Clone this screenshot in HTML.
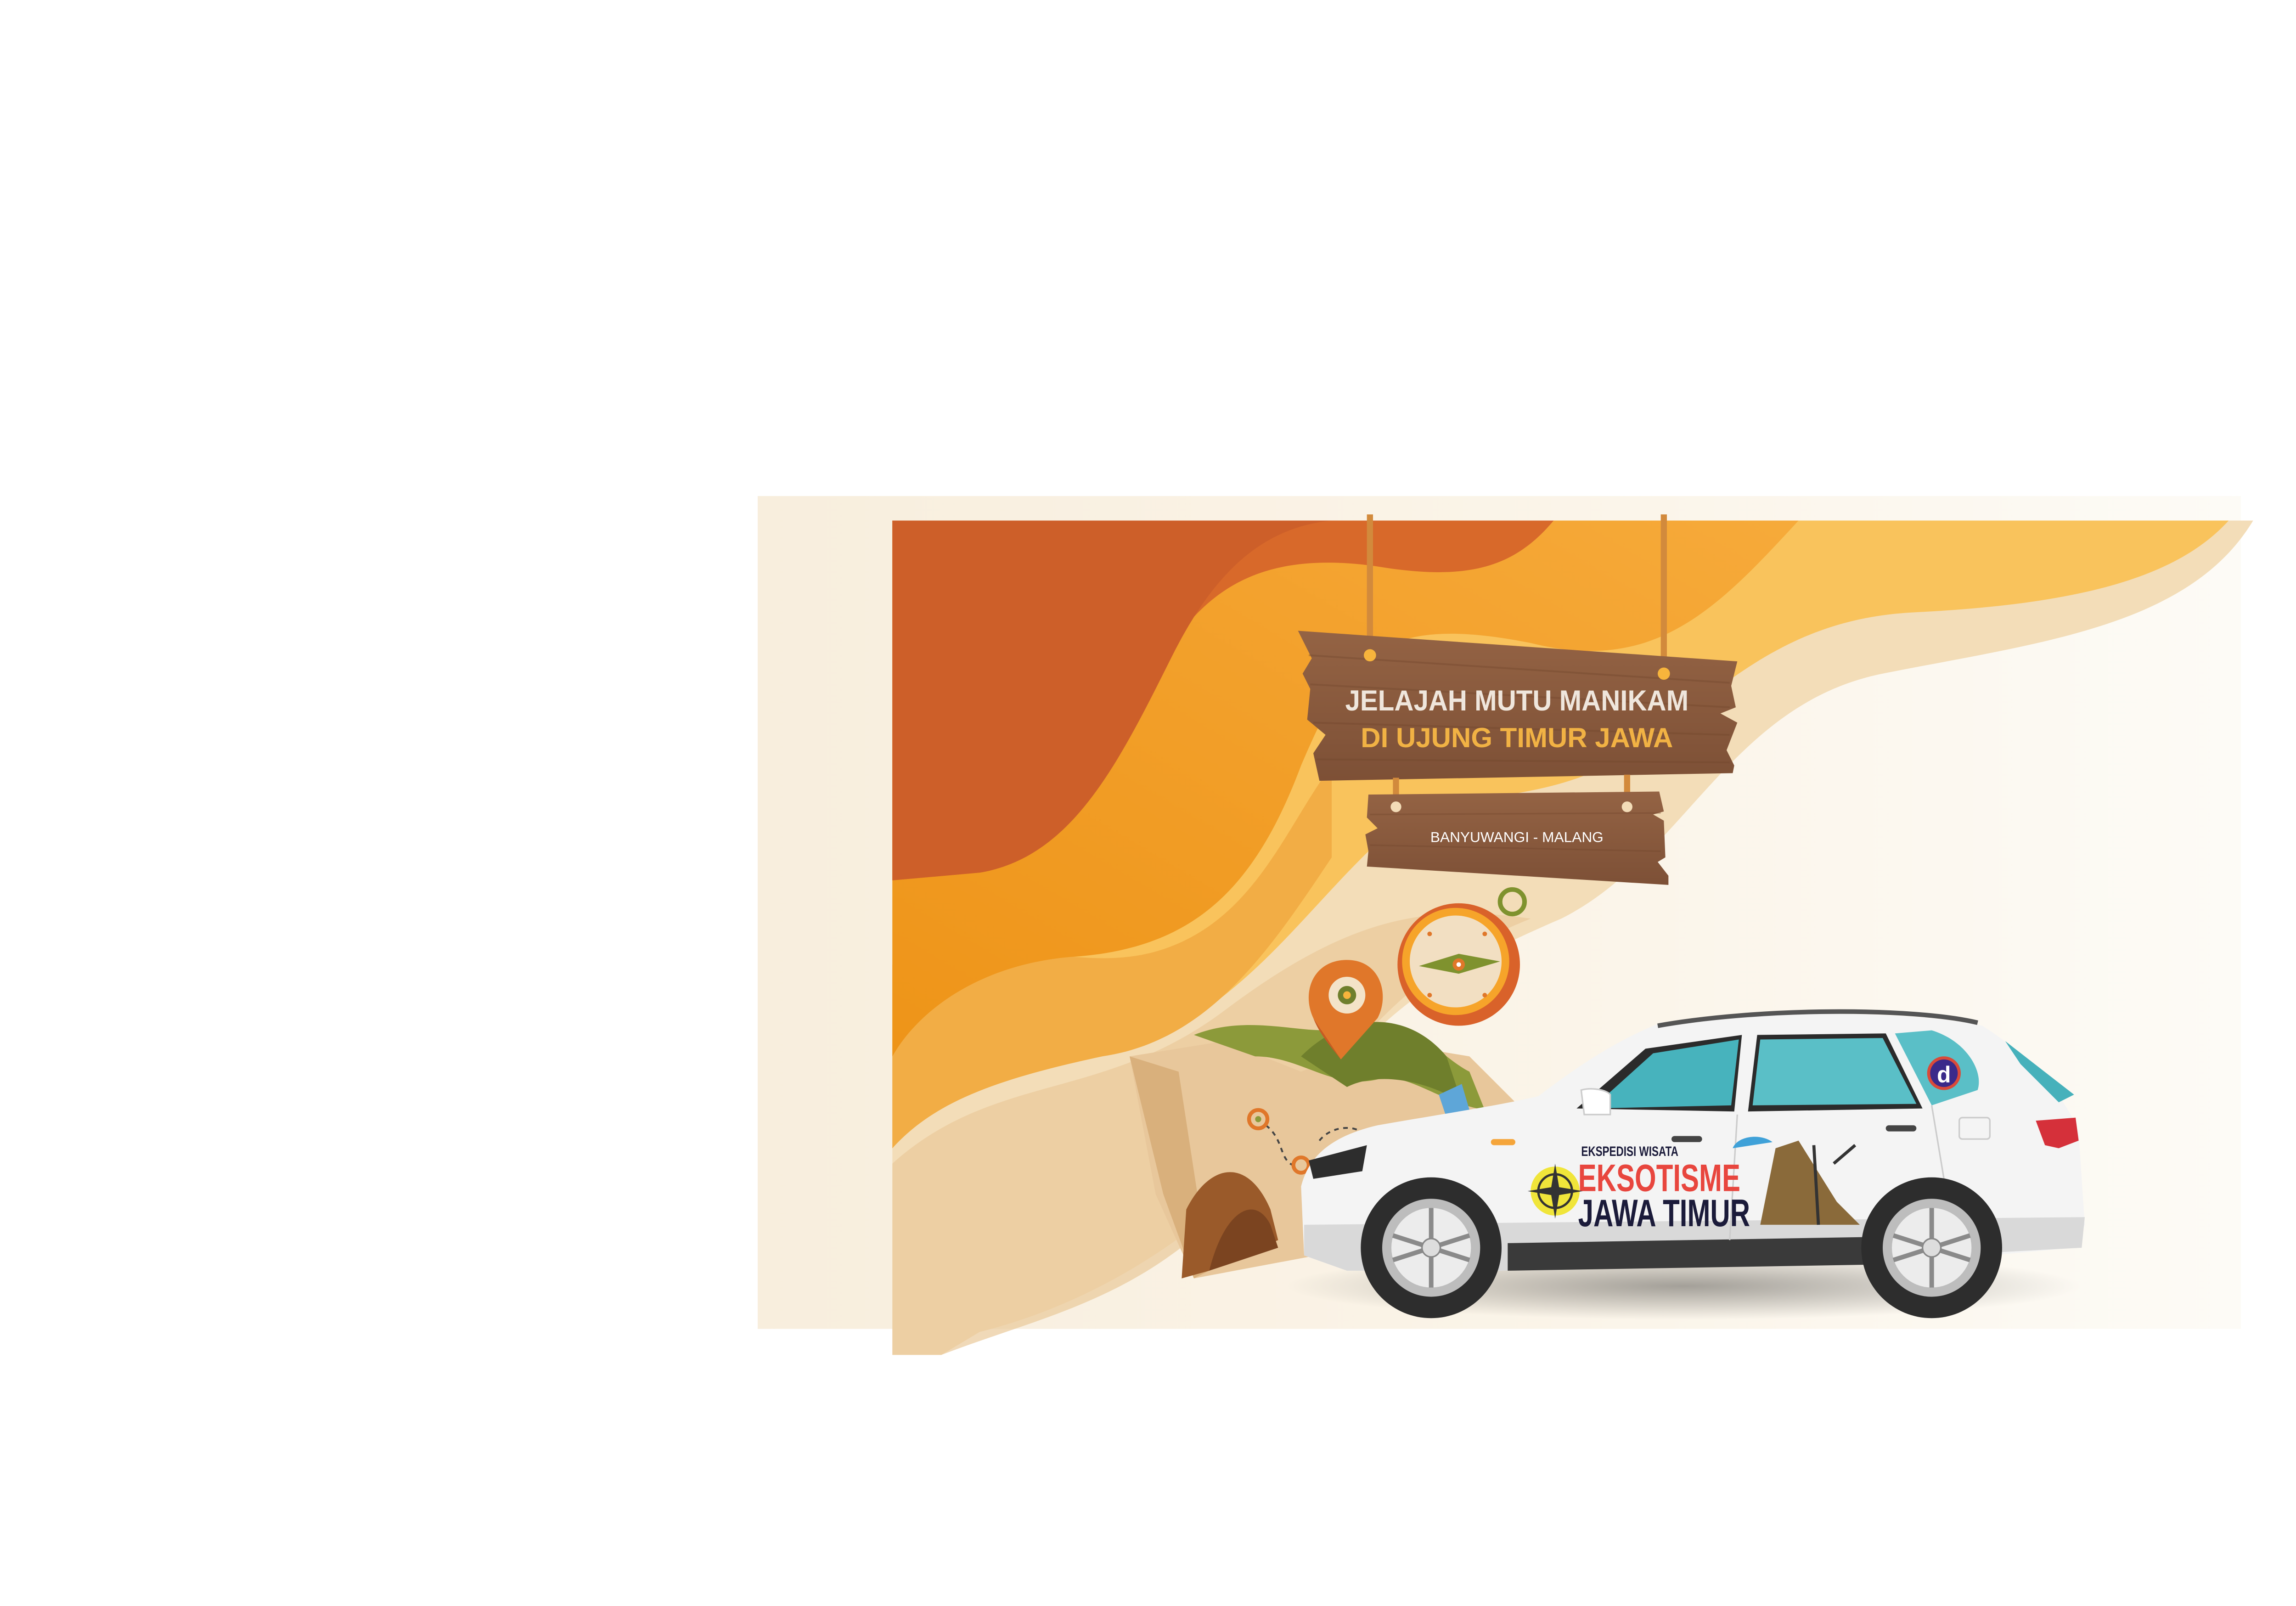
<!DOCTYPE html>
<html><head><meta charset="utf-8"><style>
html,body{margin:0;padding:0;background:#fff;}
svg{display:block;}
</style></head><body>
<svg width="5170" height="3497" viewBox="0 0 1551 1049" preserveAspectRatio="none" xmlns="http://www.w3.org/2000/svg">
<defs>
<linearGradient id="bg" x1="0" x2="1" y1="0" y2="0"><stop offset="0" stop-color="#f8eedd"/><stop offset="0.6" stop-color="#fbf5ea"/><stop offset="1" stop-color="#fdfbf6"/></linearGradient>
<linearGradient id="wood" x1="0" x2="0" y1="0" y2="1"><stop offset="0" stop-color="#946344"/><stop offset="1" stop-color="#7d5036"/></linearGradient>
<linearGradient id="org" x1="0" x2="1" y1="1" y2="0"><stop offset="0" stop-color="#ee9418"/><stop offset="1" stop-color="#f6aa3a"/></linearGradient>
<radialGradient id="shadow" cx="0.5" cy="0.5" r="0.5"><stop offset="0" stop-color="#000" stop-opacity="0.35"/><stop offset="1" stop-color="#000" stop-opacity="0"/></radialGradient>
</defs>
<rect x="495" y="324" width="969" height="544" fill="url(#bg)"/>
<!-- beige wave -->
<path d="M1472,340 C1430,410 1330,420 1230,440 C1130,460 1100,560 1020,600 C950,630 900,660 860,720 C800,800 720,850 640,870 L615,885 L583,885 L583,340 Z" fill="#f3ddb8"/>
<path d="M1000,600 C900,640 860,720 800,790 C740,850 680,860 615,885 L583,885 L583,760 C650,700 720,720 800,660 C880,600 930,590 1000,600Z" fill="#eac99a" opacity="0.7"/>
<!-- light orange -->
<path d="M1456,340 C1420,380 1350,395 1250,400 C1150,405 1110,470 1050,500 C990,530 940,510 890,560 C840,610 800,670 720,690 C650,705 610,720 583,750 L583,340 Z" fill="#f9c35c"/>
<path d="M583,630 C640,600 700,640 760,620 C820,600 840,540 870,500 L870,560 C830,620 790,680 720,690 C650,705 610,720 583,750Z" fill="#f2ad45"/>
<!-- orange -->
<path d="M1175,340 C1120,400 1080,440 1000,420 C900,400 880,430 850,500 C820,580 780,620 700,625 C640,630 600,660 583,690 L583,340 Z" fill="url(#org)"/>
<!-- dark orange -->
<path d="M1015,340 C990,370 960,380 900,370 C830,360 790,380 760,430 C720,500 700,560 640,570 L583,575 L583,340 Z" fill="#d8692a"/>
<path d="M583,340 L870,340 C820,345 790,380 765,430 C730,500 700,560 640,570 L583,575Z" fill="#cd5f29"/>
<!-- ropes -->
<rect x="893" y="336" width="4" height="92" fill="#d28a3c"/>
<rect x="1085" y="336" width="4" height="104" fill="#d28a3c"/>
<!-- sign 1 -->
<path d="M848,412 L1135,432 L1131,448 L1134,462 L1124,466 L1135,472 L1128,490 L1133,500 L1132,505 L862,510 L858,492 L866,480 L854,470 L856,450 L851,440 L857,430 Z" fill="url(#wood)"/>
<g stroke="#6f452c" stroke-opacity="0.35" stroke-width="1.2"><line x1="855" y1="428" x2="1130" y2="446"/><line x1="856" y1="447" x2="1130" y2="462"/><line x1="858" y1="472" x2="1130" y2="480"/><line x1="860" y1="496" x2="1130" y2="498"/></g>
<circle cx="895" cy="428" r="4" fill="#f7b43c"/><circle cx="1087" cy="440" r="4" fill="#f7b43c"/>
<text x="991" y="464" text-anchor="middle" font-family="Liberation Sans, sans-serif" font-weight="bold" font-size="19" fill="#efe6dc" transform="translate(991,0) scale(0.92,1) translate(-991,0)">JELAJAH MUTU MANIKAM</text>
<text x="991" y="488" text-anchor="middle" font-family="Liberation Sans, sans-serif" font-weight="bold" font-size="18" fill="#f1b244">DI UJUNG TIMUR JAWA</text>
<!-- ropes 2 -->
<rect x="910" y="508" width="4" height="20" fill="#d28a3c"/><rect x="1061" y="506" width="4" height="22" fill="#d28a3c"/>
<!-- sign 2 -->
<path d="M894,519 L1084,517 L1087,530 L1080,532 L1087,536 L1088,560 L1083,563 L1090,572 L1090,578 L893,566 L894,556 L892,545 L900,541 L893,534 Z" fill="url(#wood)"/>
<g stroke="#6f452c" stroke-opacity="0.35" stroke-width="1"><line x1="895" y1="532" x2="1085" y2="531"/><line x1="895" y1="552" x2="1085" y2="556"/></g>
<circle cx="912" cy="527" r="3.5" fill="#f3dcb7"/><circle cx="1063" cy="527" r="3.5" fill="#f3dcb7"/>
<text x="991" y="550" text-anchor="middle" font-family="Liberation Sans, sans-serif" font-size="9.5" fill="#fff">BANYUWANGI - MALANG</text>
<!-- map -->
<path d="M738,690 L800,680 L850,700 L900,680 L960,690 L990,720 L980,800 L900,830 L860,820 L780,835 L755,780 Z" fill="#e8c79b"/>
<path d="M738,690 L760,780 L780,835 L790,830 L770,700Z" fill="#d9b07c"/>
<path d="M780,676 C820,660 860,680 880,670 C920,660 940,690 960,700 L970,725 C940,720 920,700 900,705 C870,712 850,690 820,690 Z" fill="#8c9a3a"/>
<path d="M850,690 C880,660 920,660 945,690 L955,720 C930,705 900,700 880,710Z" fill="#6f7f2c"/>
<path d="M772,835 L775,790 C790,760 815,755 830,790 L835,810 L790,830 Z" fill="#9a5a2a"/>
<path d="M790,830 C800,790 820,780 830,800 L835,815Z" fill="#7b4420"/>
<path d="M940,715 L955,708 L960,725 L945,730Z" fill="#5ea6d8"/>
<!-- path dashes and markers -->
<path d="M827,735 C840,745 835,760 848,762 M862,745 C870,735 885,735 890,740" stroke="#444" stroke-width="1.2" fill="none" stroke-dasharray="3,3"/>
<circle cx="822" cy="731" r="6" fill="none" stroke="#e0772a" stroke-width="2.5"/><circle cx="822" cy="731" r="2" fill="#8c9a3a"/>
<circle cx="850" cy="761" r="5" fill="none" stroke="#e0772a" stroke-width="2.5"/>
<!-- pin -->
<path d="M880,627 C902,627 908,650 900,665 L876,692 L858,665 C850,648 858,627 880,627Z" fill="#e0772a"/>
<path d="M876,692 L858,665 C862,675 868,682 876,692Z" fill="#c85a22"/>
<circle cx="880" cy="650" r="12" fill="#f3e3c8"/><circle cx="880" cy="650" r="6" fill="#6f7f2c"/><circle cx="880" cy="650" r="2.5" fill="#f7b43c"/>
<!-- compass -->
<circle cx="988" cy="589" r="8" fill="none" stroke="#7f922e" stroke-width="3"/>
<circle cx="953" cy="630" r="40" fill="#d9622a"/>
<circle cx="951" cy="628" r="35" fill="#f6a42a"/>
<circle cx="951" cy="628" r="30" fill="#f2dfc2"/>
<path d="M927,631 L953,623 L980,628 L953,636Z" fill="#7f922e"/>
<circle cx="953" cy="630" r="4" fill="#e0772a"/><circle cx="953" cy="630" r="1.5" fill="#fff"/>
<g fill="#e0772a"><circle cx="934" cy="610" r="1.5"/><circle cx="970" cy="610" r="1.5"/><circle cx="934" cy="650" r="1.5"/><circle cx="970" cy="650" r="1.5"/></g>
<!-- car shadow -->
<ellipse cx="1100" cy="840" rx="260" ry="22" fill="url(#shadow)"/>
<!-- car body -->
<path d="M1085,668 C1150,660 1250,660 1295,670 C1320,685 1350,715 1358,740 L1362,800 L1355,815 L1300,820 L1220,825 L980,830 L880,830 L852,820 L850,775 C855,755 870,742 900,735 C940,728 980,722 1005,716 C1030,697 1055,680 1085,668Z" fill="#f4f4f4"/>
<path d="M852,800 L1362,795 L1360,815 L1230,822 L980,830 L880,830 L852,820Z" fill="#d9d9d9"/>
<path d="M985,812 L1220,808 L1225,826 L985,830Z" fill="#3a3a3a"/>
<!-- roof rail -->
<path d="M1083,670 C1150,658 1250,658 1292,668" stroke="#555" stroke-width="3" fill="none"/>
<!-- windows -->
<path d="M1030,724 L1075,685 L1138,676 L1133,726 Z" fill="#2b2b2b"/>
<path d="M1040,724 L1080,688 L1136,679 L1131,722 Z" fill="#47b3bd"/>
<path d="M1148,676 L1232,675 L1256,724 L1142,726 Z" fill="#2b2b2b"/>
<path d="M1150,679 L1230,678 L1252,721 L1145,722 Z" fill="#5abfc7"/>
<path d="M1238,675 L1262,673 C1285,680 1296,700 1292,712 L1262,722 Z" fill="#5abfc7"/>
<path d="M1310,680 L1355,715 L1345,720 L1320,695Z" fill="#46b1bb"/>
<path d="M1033,712 C1040,710 1050,712 1052,715 L1052,728 L1035,728Z" fill="#fff" stroke="#ccc" stroke-width="1"/>
<circle cx="1270" cy="701" r="11" fill="#d94a3a"/><circle cx="1270" cy="701" r="9" fill="#3a2a8a"/>
<text x="1270" y="707" text-anchor="middle" font-family="Liberation Sans, sans-serif" font-weight="bold" font-size="15" fill="#fff">d</text>
<!-- door lines/handles -->
<path d="M1135,728 L1130,810 M1262,722 L1275,800" stroke="#ccc" stroke-width="1" fill="none"/>
<rect x="1092" y="742" width="20" height="4" rx="2" fill="#444"/><rect x="1232" y="735" width="20" height="4" rx="2" fill="#444"/>
<rect x="974" y="744" width="16" height="4" rx="2" fill="#f5a53a"/>
<rect x="1280" y="730" width="20" height="14" rx="2" fill="none" stroke="#ccc"/>
<path d="M1330,732 L1356,730 L1358,745 L1345,750 L1336,748Z" fill="#d5303a"/>
<path d="M855,758 L893,748 L890,765 L858,770Z" fill="#2d2d2d"/>
<!-- decal -->
<text x="1033" y="755" font-family="Liberation Sans, sans-serif" font-weight="bold" font-size="9" fill="#1b1b3a" transform="translate(1033,0) scale(0.75,1) translate(-1033,0)">EKSPEDISI WISATA</text>
<text x="1031" y="778" font-family="Liberation Sans, sans-serif" font-weight="bold" font-size="25" fill="#e8463e" transform="translate(1031,0) scale(0.72,1) translate(-1031,0)">EKSOTISME</text>
<text x="1031" y="801" font-family="Liberation Sans, sans-serif" font-weight="bold" font-size="25" fill="#1b1b3a" transform="translate(1031,0) scale(0.72,1) translate(-1031,0)">JAWA TIMUR</text>
<circle cx="1016" cy="778" r="16" fill="#f0e53a"/><circle cx="1016" cy="778" r="11" fill="none" stroke="#333" stroke-width="1.5"/>
<path d="M1016,760 L1019,778 L1016,796 L1013,778Z M998,778 L1016,775 L1034,778 L1016,781Z" fill="#333"/>
<path d="M1150,800 L1160,750 L1175,745 L1200,785 L1215,800Z" fill="#8a6a3a"/>
<path d="M1185,748 L1188,800 M1198,760 L1212,748" stroke="#333" stroke-width="2"/>
<path d="M1132,750 C1135,742 1150,740 1158,746 L1132,750Z" fill="#3fa1d8"/>
<!-- wheels -->
<circle cx="935" cy="815" r="46" fill="#2d2d2d"/>
<circle cx="935" cy="815" r="32" fill="#bdbdbd"/><circle cx="935" cy="815" r="26" fill="#ececec"/>
<g stroke="#8a8a8a" stroke-width="3"><line x1="935" y1="789" x2="935" y2="841"/><line x1="910" y1="807" x2="960" y2="823"/><line x1="910" y1="823" x2="960" y2="807"/></g>
<circle cx="935" cy="815" r="6" fill="#ddd" stroke="#888"/>
<circle cx="1262" cy="815" r="46" fill="#2d2d2d"/>
<circle cx="1262" cy="815" r="32" fill="#bdbdbd"/><circle cx="1262" cy="815" r="26" fill="#ececec"/>
<g stroke="#8a8a8a" stroke-width="3"><line x1="1262" y1="789" x2="1262" y2="841"/><line x1="1237" y1="807" x2="1287" y2="823"/><line x1="1237" y1="823" x2="1287" y2="807"/></g>
<circle cx="1262" cy="815" r="6" fill="#ddd" stroke="#888"/>
</svg>
</body></html>
